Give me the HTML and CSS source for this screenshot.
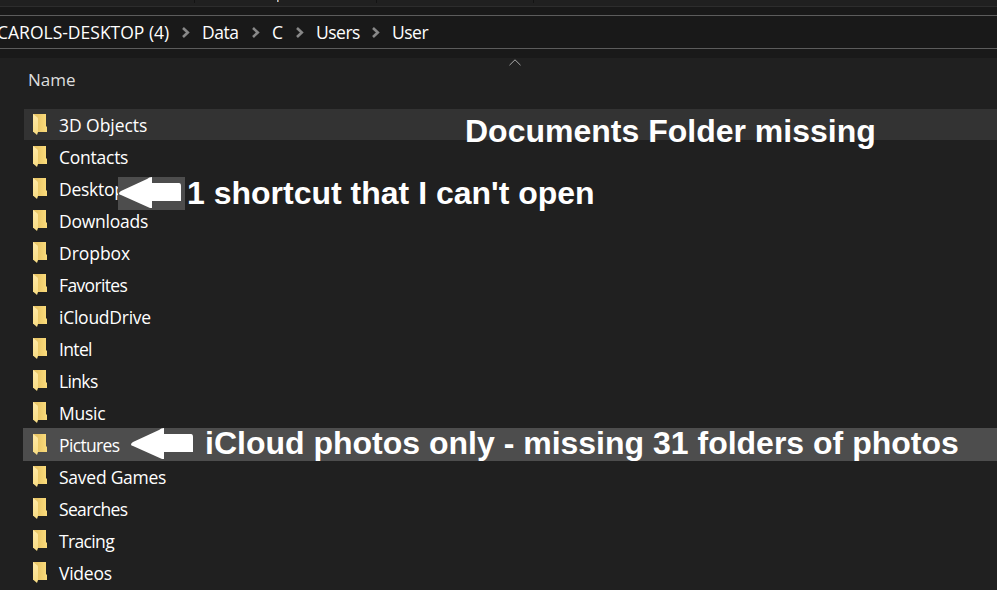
FILE: index.html
```html
<!DOCTYPE html>
<html lang="en">
<head>
    <meta charset="UTF-8">
    <meta name="viewport" content="width=device-width, initial-scale=1.0">
    <title>User</title>
    <link rel="stylesheet" href="styles.css">
</head>
<body>
    <svg class="defs" aria-hidden="true">
        <defs>
            <linearGradient id="back" x1="0" x2="1" y1="0" y2="0">
                <stop offset="0.3" stop-color="#eac768"/>
                <stop offset="1" stop-color="#fbdc7c"/>
            </linearGradient>
            <linearGradient id="flap" x1="0" x2="0" y1="0" y2="1">
                <stop offset="0" stop-color="#ffe9a6"/>
                <stop offset="1" stop-color="#f8dc83"/>
            </linearGradient>
            <symbol id="folder" viewBox="0 0 14 21">
                <path fill="url(#back)" d="M0 0H13V12L14 13V18H0Z"/>
                <path fill="url(#flap)" d="M0 0L4.5 3.5Q5 4 5 5V18L4 21L0 17.5Z"/>
            </symbol>
            <symbol id="chevron" viewBox="0 0 8 11">
                <path fill="none" stroke="#888" stroke-width="2.6" d="M1 1L5.8 5.5L1 10"/>
            </symbol>
            <symbol id="arrow" viewBox="0 0 63 32">
                <path fill="#fff" d="M0 16.5Q0 15 2 14L28 2Q30 0 33 0V6H60Q62 6 62 9V24H33V31H31L2 18Q0 17.5 0 16.5Z"/>
            </symbol>
        </defs>
    </svg>

    <div class="window">
        <div class="ribbon"><i></i><b></b><i></i><i></i></div>
        <div class="address-bar">
            <span class="crumb host">CAROLS-DESKTOP (4)</span>
            <svg class="chevron"><use href="#chevron"/></svg>
            <span class="crumb data">Data</span>
            <svg class="chevron"><use href="#chevron"/></svg>
            <span class="crumb drive">C</span>
            <svg class="chevron"><use href="#chevron"/></svg>
            <span class="crumb users">Users</span>
            <svg class="chevron"><use href="#chevron"/></svg>
            <span class="crumb">User</span>
        </div>
        <div class="content">
            <div class="column-header">
                <span>Name</span>
                <svg class="sort" viewBox="0 0 12 7"><path d="M0.5 6.2L6 0.8L11.5 6.2"/></svg>
            </div>
            <ul class="files">
                <li class="hover wide"><svg class="folder"><use href="#folder"/></svg><span>3D Objects</span></li>
                <li><svg class="folder"><use href="#folder"/></svg><span>Contacts</span></li>
                <li><svg class="folder"><use href="#folder"/></svg><span>Desktop</span></li>
                <li><svg class="folder"><use href="#folder"/></svg><span>Downloads</span></li>
                <li class="wide"><svg class="folder"><use href="#folder"/></svg><span>Dropbox</span></li>
                <li class="narrow"><svg class="folder"><use href="#folder"/></svg><span>Favorites</span></li>
                <li><svg class="folder"><use href="#folder"/></svg><span>iCloudDrive</span></li>
                <li class="narrow"><svg class="folder"><use href="#folder"/></svg><span>Intel</span></li>
                <li class="narrow"><svg class="folder"><use href="#folder"/></svg><span>Links</span></li>
                <li><svg class="folder"><use href="#folder"/></svg><span>Music</span></li>
                <li class="selected narrow"><svg class="folder"><use href="#folder"/></svg><span>Pictures</span></li>
                <li><svg class="folder"><use href="#folder"/></svg><span>Saved Games</span></li>
                <li class="narrow"><svg class="folder"><use href="#folder"/></svg><span>Searches</span></li>
                <li class="narrow"><svg class="folder"><use href="#folder"/></svg><span>Tracing</span></li>
                <li><svg class="folder"><use href="#folder"/></svg><span>Videos</span></li>
            </ul>
        </div>

        <!-- notes over the list -->
        <div class="note note-documents">Documents Folder missing</div>
        <div class="arrow-box"><svg class="arrow"><use href="#arrow"/></svg></div>
        <div class="note note-desktop">1 shortcut that I can't open</div>
        <svg class="arrow arrow-pictures"><use href="#arrow"/></svg>
        <div class="note note-pictures">iCloud photos only - missing 31 folders of photos</div>
    </div>
</body>
</html>
```
FILE: styles.css
```css
body {
    margin: 0;
    background-color: #202020;
    color: #fff;
    font-family: "Open Sans", "Noto Sans", sans-serif;
    font-size: 17px;
    overflow: hidden;
}
.defs {
    position: absolute;
    width: 0;
    height: 0;
}
.window {
    position: relative;
    height: 590px;
    overflow: hidden;
    background: #191919;
}
.ribbon {
    display: flex;
    height: 6px;
    padding-left: 194px;
    background: #202020;
    border-bottom: 1px solid #2d2d2d;
}
.ribbon i {
    width: 1px;
    height: 3px;
    margin-right: 156px;
    background: #141414;
}
.ribbon i:first-child {
    margin-right: 82px;
}
.ribbon b {
    width: 2px;
    height: 2px;
    margin-right: 97px;
    background: linear-gradient(90deg, #8fb8dc 50%, #b98550 50%);
}
.address-bar {
    display: flex;
    align-items: center;
    box-sizing: border-box;
    height: 34px;
    margin: 8px 0 9px;
    border-top: 1px solid #5c5c5c;
    border-bottom: 1px solid #5c5c5c;
    white-space: nowrap;
}
.crumb {
    font-size: 17.5px;
    letter-spacing: -0.5px;
}
.host {
    width: 171px;
    margin-left: -3px;
    margin-right: 14px;
    letter-spacing: 0;
}
.chevron {
    flex: none;
    width: 8px;
    height: 11px;
    margin-right: 12px;
}
.data {
    width: 50px;
}
.drive {
    width: 24px;
}
.users {
    width: 56px;
}
.content {
    height: 532px;
    background: #202020;
}
.column-header {
    display: flex;
    height: 51px;
    padding-left: 28px;
    color: #dedede;
    line-height: 44px;
}
.column-header span {
    width: 481px;
}
.sort {
    width: 12px;
    height: 7px;
    margin-top: 1px;
    fill: none;
    stroke: #aaa;
}
.files {
    margin: 0;
    padding: 0 0 0 23px;
    list-style: none;
    font-size: 17.5px;
}
.files li {
    display: flex;
    height: 32px;
    padding-left: 10px;
    line-height: 32px;
    letter-spacing: -0.25px;
}
.files .wide {
    letter-spacing: -0.05px;
}
.files .narrow {
    letter-spacing: -0.65px;
}
.folder {
    width: 14px;
    height: 21px;
    margin: 5px 12px 0 0;
}
.files .hover {
    background: linear-gradient(#333, #333) 1px 0 / 100% 31px no-repeat;
}
.files .selected {
    background: #4d4d4d;
    box-shadow: 0 -1px #4d4d4d;
}
.note {
    position: absolute;
    font: bold 32px/36px "Liberation Sans", Arial, sans-serif;
    white-space: nowrap;
}
.note-documents {
    left: 465px;
    top: 113px;
}
.note-desktop {
    left: 187px;
    top: 175px;
}
.note-pictures {
    left: 205px;
    top: 425px;
}
.arrow {
    display: block;
    width: 63px;
    height: 32px;
}
.arrow-box {
    position: absolute;
    left: 118px;
    top: 177px;
    width: 67px;
    height: 33px;
    background: #4d4d4d;
}
.arrow-box .arrow {
    margin-left: 1px;
}
.arrow-pictures {
    position: absolute;
    left: 131px;
    top: 428px;
}
```
